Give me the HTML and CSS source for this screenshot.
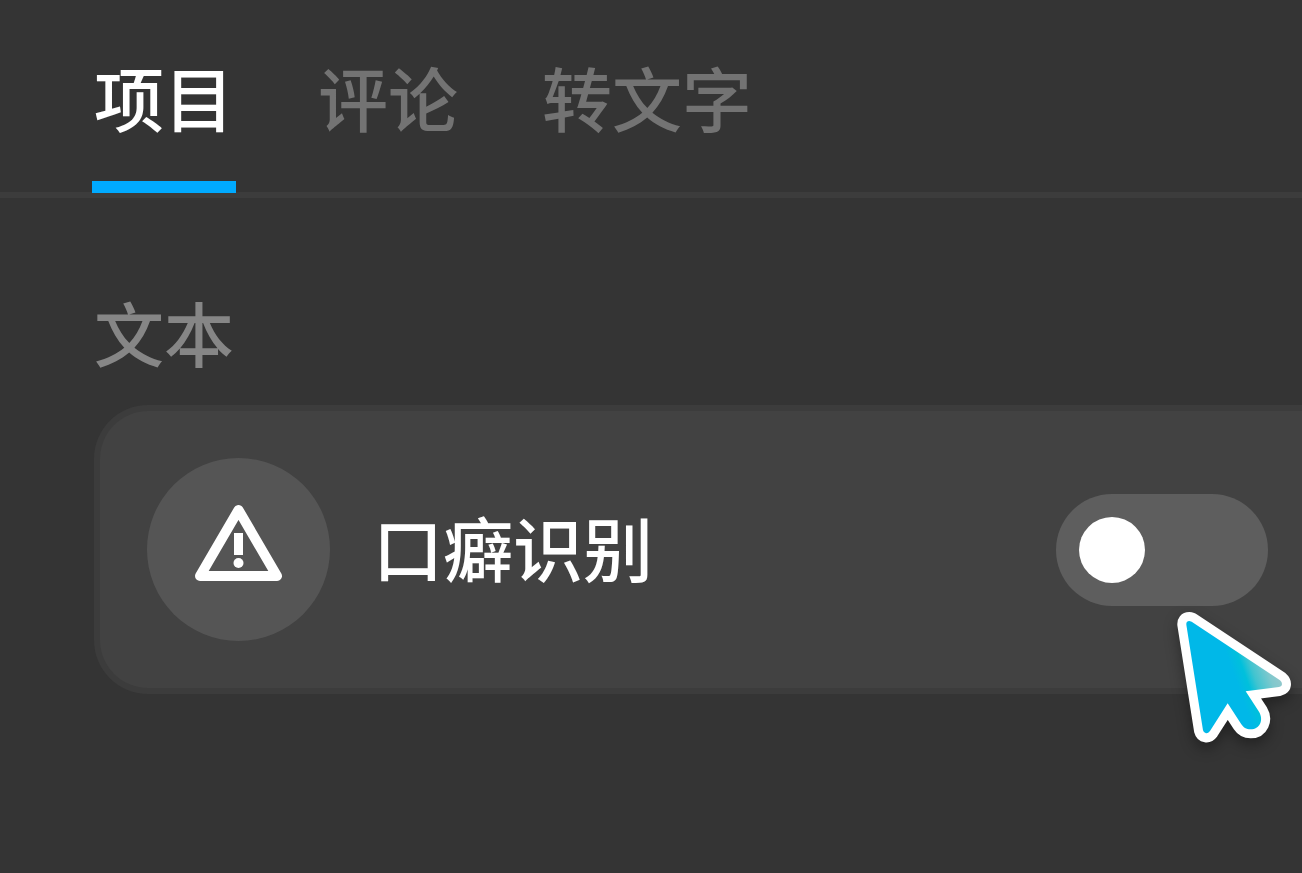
FILE: index.html
```html
<!DOCTYPE html>
<html lang="zh-CN">
<head>
   <meta charset="UTF-8">
   <meta name="viewport" content="width=device-width, initial-scale=1.0">
   <title>项目</title>
   <link rel="stylesheet" href="styles.css">
</head>
<body>
   <nav class="tabs">
      <button class="tab active" type="button">项目</button>
      <button class="tab" type="button">评论</button>
      <button class="tab" type="button">转文字</button>
   </nav>
   <main class="panel">
      <h2 class="section-title">文本</h2>
      <div class="card">
         <div class="icon">
            <svg viewBox="0 0 88 78" width="88" height="78" aria-hidden="true">
               <path d="M43.5 6 L82 72 H5 Z" fill="none" stroke="#fff" stroke-width="10" stroke-linejoin="round"/>
               <rect x="39" y="29" width="9" height="22" fill="#fff"/>
               <circle cx="43.5" cy="59" r="5" fill="#fff"/>
            </svg>
         </div>
         <label class="name" for="habit">口癖识别</label>
         <input class="switch" type="checkbox" id="habit">
         <svg class="cursor" viewBox="0 0 426 540" aria-hidden="true">
            <defs>
               <linearGradient id="fill" gradientUnits="userSpaceOnUse" x1="225" y1="264" x2="344" y2="222">
                  <stop offset="0" stop-color="#00b8e8"/>
                  <stop offset="0.25" stop-color="#00c0dc"/>
                  <stop offset="0.45" stop-color="#40c4d0"/>
                  <stop offset="0.8" stop-color="#80c8cd"/>
                  <stop offset="1" stop-color="#90c8cc"/>
               </linearGradient>
            </defs>
            <path class="outline" d="M79 104 Q78 93 88 93 L95 95 L360 271 Q366 276 366 282 Q366 289 357 291 L257 304 L297 365 C312 390 299 418 272 418 C258 418 250 412 244 403 L203 340 L150 423 Q144 431 138 430 Q131 429 129 421 Z"/>
            <path fill="url(#fill)" d="M79 104 Q78 93 88 93 L95 95 L360 271 Q366 276 366 282 Q366 289 357 291 L257 304 L297 365 C312 390 299 418 272 418 C258 418 250 412 244 403 L203 340 L150 423 Q144 431 138 430 Q131 429 129 421 Z"/>
         </svg>
      </div>
   </main>
</body>
</html>
```
FILE: styles.css
```css
*{
   margin: 0;
   padding: 0;
   box-sizing: border-box;
}

body{
   background-color: #343434;
   color: #fff;
   font-family: "Noto Sans CJK SC", sans-serif;
   font-size: 70px;
   font-weight: 500;
   line-height: 104px;
   overflow-x: hidden;
}

.tabs{
   display: flex;
   gap: 80px;
   padding: 45px 92px 0;
   border-bottom: 6px solid #3c3c3c;
}

.tab{
   padding: 0 2px 32px;
   margin-bottom: -1px;
   border: 0;
   border-bottom: 12px solid transparent;
   background: none;
   color: #737373;
   font: inherit;
}

.tab.active{
   color: #fff;
   border-color: #00aaff;
}

.panel{
   padding: 82px 0 82px 94px;
}

.section-title{
   color: #868686;
   font-size: 70px;
   font-weight: 500;
   margin-bottom: 21px;
}

.card{
   position: relative;
   display: flex;
   align-items: center;
   padding: 47px 34px 47px 47px;
   border: 6px solid #3c3c3c;
   border-right: 0;
   border-radius: 54px 0 0 54px;
   background-color: #424242;
}

.icon{
   display: flex;
   justify-content: center;
   padding-top: 46px;
   width: 183px;
   height: 183px;
   border-radius: 50%;
   background-color: #555;
}

.name{
   flex: 1;
   padding-bottom: 6px;
   margin-left: 43px;
}

.switch{
   appearance: none;
   display: flex;
   align-items: center;
   width: 212px;
   height: 112px;
   padding: 0 23px;
   border-radius: 56px;
   background-color: #5e5e5e;
}

.switch::before{
   content: "";
   width: 66px;
   height: 66px;
   border-radius: 50%;
   background-color: #fff;
}

.switch:checked{
   justify-content: flex-end;
   background-color: #00aaff;
}

.cursor{
   position: absolute;
   right: 0;
   top: 179px;
   width: 142px;
   height: 180px;
   filter: drop-shadow(0 6px 7px rgba(0, 0, 0, 0.35));
   pointer-events: none;
}

.outline{
   fill: #fff;
   stroke: #fff;
   stroke-width: 54;
   stroke-linejoin: round;
}
```
